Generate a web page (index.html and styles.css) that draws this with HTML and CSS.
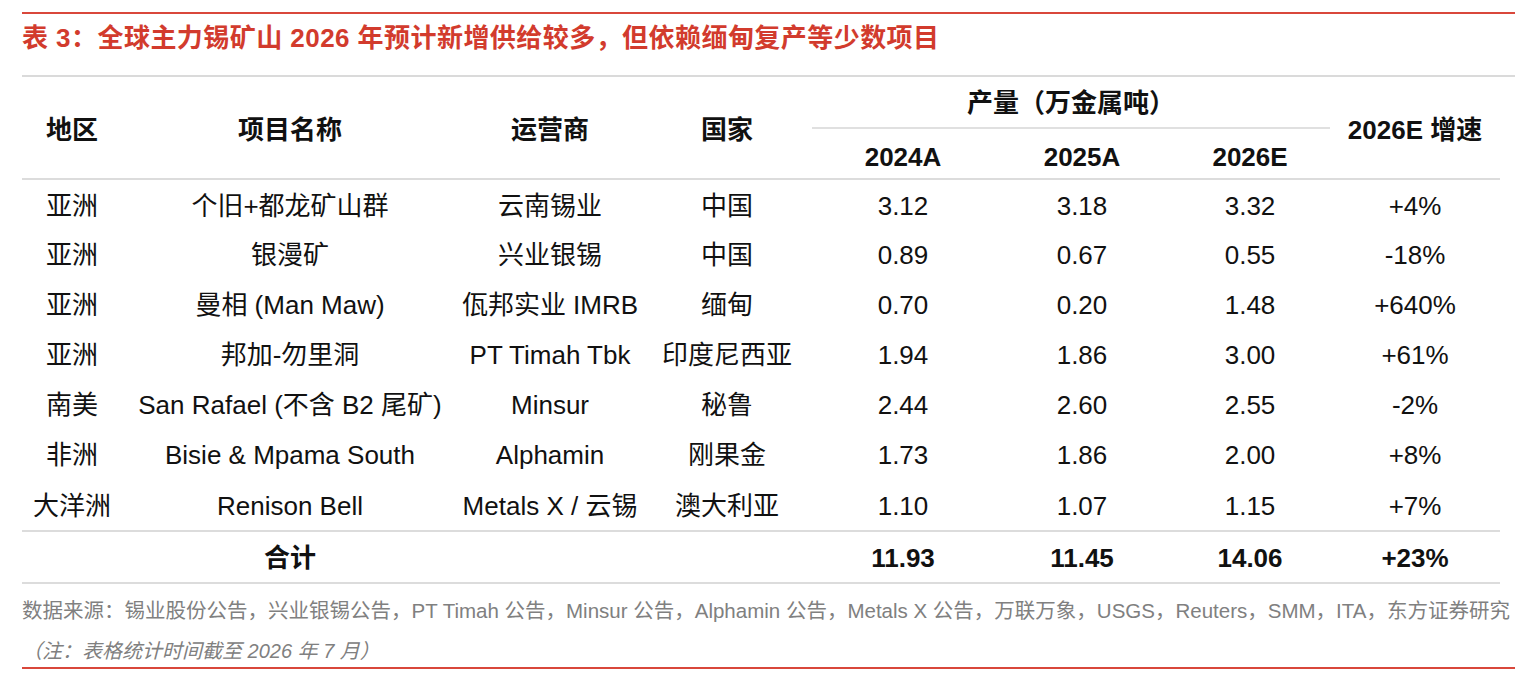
FILE: index.html
```html
<!DOCTYPE html>
<html lang="zh-CN">
<head>
<meta charset="utf-8">
<title>表 3</title>
<link rel="stylesheet" href="styles.css">
</head>
<body>
<div class="page">
  <div class="title">表 3：全球主力锡矿山 2026 年预计新增供给较多，但依赖缅甸复产等少数项目</div>
  <table class="data">
    <colgroup>
      <col class="c1"><col class="c2"><col class="c3"><col class="c4">
      <col class="c5"><col class="c6"><col class="c7"><col class="c8">
    </colgroup>
    <thead>
      <tr class="h1">
        <th rowspan="2">地区</th>
        <th rowspan="2">项目名称</th>
        <th rowspan="2">运营商</th>
        <th rowspan="2">国家</th>
        <th colspan="3" class="group">产量（万金属吨）</th>
        <th rowspan="2" class="growth">2026E 增速</th>
      </tr>
      <tr class="h2">
        <th>2024A</th>
        <th>2025A</th>
        <th>2026E</th>
      </tr>
    </thead>
    <tbody>
      <tr><td>亚洲</td><td>个旧+都龙矿山群</td><td>云南锡业</td><td>中国</td><td>3.12</td><td>3.18</td><td>3.32</td><td>+4%</td></tr>
      <tr><td>亚洲</td><td>银漫矿</td><td>兴业银锡</td><td>中国</td><td>0.89</td><td>0.67</td><td>0.55</td><td>-18%</td></tr>
      <tr><td>亚洲</td><td>曼相 (Man Maw)</td><td>佤邦实业 IMRB</td><td>缅甸</td><td>0.70</td><td>0.20</td><td>1.48</td><td>+640%</td></tr>
      <tr><td>亚洲</td><td>邦加-勿里洞</td><td>PT Timah Tbk</td><td>印度尼西亚</td><td>1.94</td><td>1.86</td><td>3.00</td><td>+61%</td></tr>
      <tr><td>南美</td><td>San Rafael (不含 B2 尾矿)</td><td>Minsur</td><td>秘鲁</td><td>2.44</td><td>2.60</td><td>2.55</td><td>-2%</td></tr>
      <tr><td>非洲</td><td>Bisie &amp; Mpama South</td><td>Alphamin</td><td>刚果金</td><td>1.73</td><td>1.86</td><td>2.00</td><td>+8%</td></tr>
      <tr class="last"><td>大洋洲</td><td>Renison Bell</td><td>Metals X / 云锡</td><td>澳大利亚</td><td>1.10</td><td>1.07</td><td>1.15</td><td>+7%</td></tr>
      <tr class="total"><td></td><td>合计</td><td></td><td></td><td>11.93</td><td>11.45</td><td>14.06</td><td>+23%</td></tr>
    </tbody>
  </table>
  <div class="footer">
    <div class="source">数据来源：锡业股份公告，兴业银锡公告，PT Timah 公告，Minsur 公告，Alphamin 公告，Metals X 公告，万联万象，USGS，Reuters，SMM，ITA，东方证券研究</div>
    <div class="note">（注：表格统计时间截至 2026 年 7 月）</div>
  </div>
</div>
</body>
</html>
```

FILE: styles.css
```css
html, body {
  margin: 0;
  padding: 0;
  background: #ffffff;
}

body {
  font-family: "Liberation Sans", "Noto Sans CJK SC", sans-serif;
  color: #111111;
}

.page {
  width: 1493px;
  margin-left: 22px;
  padding-top: 12px;
}

.title {
  border-top: 2px solid #d9473b;
  border-bottom: 2px solid #dadada;
  color: #d23b2d;
  font-weight: bold;
  font-size: 26px;
  letter-spacing: 0.45px;
  line-height: 32px;
  padding-top: 8px;
  padding-bottom: 21px;
  white-space: nowrap;
}

.data {
  width: 1478px;
  border-collapse: collapse;
  table-layout: fixed;
  font-size: 26px;
}

.c1 { width: 100px; }
.c2 { width: 336px; }
.c3 { width: 184px; }
.c4 { width: 170px; }
.c5 { width: 182px; }
.c6 { width: 176px; }
.c7 { width: 160px; }
.c8 { width: 170px; }

.data th,
.data td {
  padding: 2px 0 0 0;
  line-height: 30px;
  text-align: center;
  vertical-align: middle;
  white-space: nowrap;
}

.data th {
  font-weight: bold;
  color: #111111;
}

.h1 { height: 51px; }
.h2 { height: 51px; }

.h1 th {
  padding-top: 5px;
}

.h1 th.group {
  border-bottom: 2px solid #e0e0e0;
  padding-top: 2px;
}

.h2 th {
  padding-top: 6px;
}

.data thead {
  border-bottom: 2px solid #dcdcdc;
}

.data tbody tr {
  height: 50px;
}

.data tbody tr.last {
  height: 52px;
  border-bottom: 2px solid #dcdcdc;
}

.data tbody tr.total {
  height: 52px;
  border-bottom: 2px solid #dcdcdc;
}

.total td {
  font-weight: bold;
}

.footer {
  color: #808080;
  font-size: 20.5px;
  border-bottom: 2px solid #d9473b;
  padding-top: 14px;
  padding-bottom: 3px;
}

.source {
  line-height: 26px;
  white-space: nowrap;
}

.note {
  line-height: 26px;
  margin-top: 14px;
  font-style: italic;
  font-size: 20px;
}
```
